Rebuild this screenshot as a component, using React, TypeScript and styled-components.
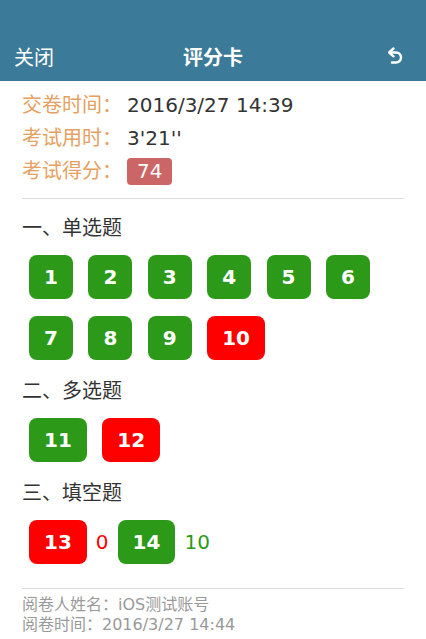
import React from 'react';
import styled, { createGlobalStyle, css } from 'styled-components';

const GlobalStyle = createGlobalStyle`
  html, body {
    margin: 0;
    padding: 0;
    background: #ffffff;
  }
  body {
    font-family: 'DejaVu Sans', 'Noto Sans CJK SC', sans-serif;
  }
`;

const Page = styled.div`
  width: 426px;
  min-height: 639px;
  background: #fff;
`;

const Header = styled.header`
  background: #3c7a99;
  padding-top: 32px;
`;

const NavBar = styled.div`
  height: 49px;
  display: grid;
  grid-template-columns: 80px 1fr 80px;
  align-items: center;
  color: #fff;
  font-size: 20px;
`;

const NavLeft = styled.div`
  padding-left: 14px;
  padding-bottom: 1px;
`;

const NavTitle = styled.div`
  text-align: center;
  font-weight: bold;
  padding-bottom: 1px;
`;

const NavRight = styled.div`
  display: flex;
  justify-content: flex-end;
  padding-right: 22px;
  padding-bottom: 1px;
`;

const Body = styled.div`
  padding: 8px 22px 0;
`;

const InfoBlock = styled.div`
  padding-bottom: 10px;
`;

const InfoLine = styled.div`
  display: flex;
  align-items: center;
  min-height: 33px;
  font-size: 20px;
  line-height: 33px;
`;

const Label = styled.span`
  color: #e6a05f;
`;

const Value = styled.span`
  color: #333;
  margin-left: 5px;
`;

const ScoreBadge = styled.span`
  margin-left: 5px;
  background: #cc6666;
  color: #fff;
  border-radius: 4px;
  height: 27px;
  line-height: 27px;
  padding: 0 10px;
`;

const Divider = styled.hr`
  border: none;
  border-top: 1px solid #dcdcdc;
  margin: 0;
`;

const SectionTitle = styled.div`
  font-size: 20px;
  line-height: 28px;
  color: #333;
  margin: 15px 0 13px;
`;

const Grid = styled.div`
  display: flex;
  flex-wrap: wrap;
  column-gap: 15.4px;
  row-gap: 17px;
  padding: 0 0 2px 7px;
`;

const FillRow = styled.div`
  display: flex;
  align-items: center;
  gap: 9px;
  padding-left: 7px;
`;

const QButton = styled.div<{ $wrong?: boolean }>`
  min-width: 44px;
  height: 44px;
  box-sizing: border-box;
  padding: 0 15px;
  border-radius: 8px;
  display: flex;
  align-items: center;
  justify-content: center;
  color: #fff;
  font-weight: bold;
  font-size: 20px;
  background: #2c9a18;
  ${(p) =>
    p.$wrong &&
    css`
      background: #ff0000;
    `}
`;

const FillScore = styled.span<{ $wrong?: boolean }>`
  font-size: 20px;
  color: ${(p) => (p.$wrong ? '#ff0000' : '#2c9a18')};
`;

const Footer = styled.div`
  margin-top: 24px;
  font-size: 16px;
  line-height: 20px;
  color: #999;
`;

const FooterText = styled.div`
  padding-top: 6px;
`;

const UndoIcon = () => (
  <svg width="17" height="19" viewBox="0 0 17 19" fill="none">
    <path
      d="M3 5.5 H9 a5 5 0 0 1 0 10 H5"
      stroke="#fff"
      strokeWidth="2.4"
      strokeLinecap="round"
      strokeLinejoin="round"
    />
    <path
      d="M6.5 1.5 L2.2 5.5 L6.5 9.3"
      stroke="#fff"
      strokeWidth="2.4"
      strokeLinecap="round"
      strokeLinejoin="round"
    />
  </svg>
);

const single = [1, 2, 3, 4, 5, 6, 7, 8, 9, 10];
const singleWrong = [10];

export default function App() {
  return (
    <Page>
      <GlobalStyle />
      <Header>
        <NavBar>
          <NavLeft>关闭</NavLeft>
          <NavTitle>评分卡</NavTitle>
          <NavRight>
            <UndoIcon />
          </NavRight>
        </NavBar>
      </Header>
      <Body>
        <InfoBlock>
          <InfoLine>
            <Label>交卷时间：</Label>
            <Value>2016/3/27 14:39</Value>
          </InfoLine>
          <InfoLine>
            <Label>考试用时：</Label>
            <Value>3'21''</Value>
          </InfoLine>
          <InfoLine>
            <Label>考试得分：</Label>
            <ScoreBadge>74</ScoreBadge>
          </InfoLine>
        </InfoBlock>
        <Divider />

        <SectionTitle>一、单选题</SectionTitle>
        <Grid>
          {single.map((n) => (
            <QButton key={n} $wrong={singleWrong.includes(n)}>
              {n}
            </QButton>
          ))}
        </Grid>

        <SectionTitle>二、多选题</SectionTitle>
        <Grid>
          <QButton>11</QButton>
          <QButton $wrong>12</QButton>
        </Grid>

        <SectionTitle>三、填空题</SectionTitle>
        <FillRow>
          <QButton $wrong>13</QButton>
          <FillScore $wrong>0</FillScore>
          <QButton>14</QButton>
          <FillScore>10</FillScore>
        </FillRow>

        <Footer>
          <Divider />
          <FooterText>
            <div>阅卷人姓名：iOS测试账号</div>
            <div>阅卷时间：2016/3/27 14:44</div>
          </FooterText>
        </Footer>
      </Body>
    </Page>
  );
}
